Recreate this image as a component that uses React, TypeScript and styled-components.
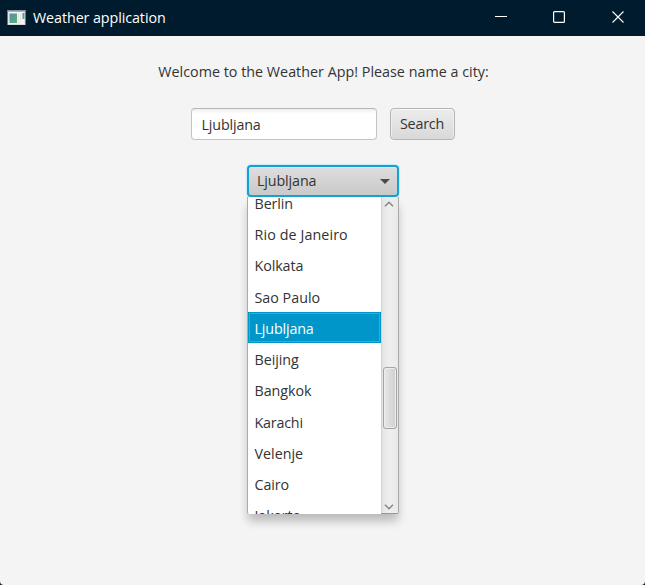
import React from "react";
import styled, { createGlobalStyle } from "styled-components";

const GlobalStyle = createGlobalStyle`
  * { box-sizing: border-box; }
  body { margin: 0; background: #001b2e; }
`;

const Window = styled.div`
  width: 645px;
  height: 585px;
  overflow: hidden;
  display: flex;
  flex-direction: column;
  background: #f4f4f4;
  border-radius: 0 0 4px 4px;
  color: #333;
  font: 14.3px/20px "Open Sans", "Noto Sans", sans-serif;
`;

const TitleBar = styled.header`
  height: 36px;
  flex: none;
  display: flex;
  align-items: center;
  background: #001b2e;
  color: #fff;
  padding-left: 7px;
`;

const Title = styled.span`
  margin-left: 7px;
  flex: 1;
`;

const WindowButton = styled.button`
  width: 58px;
  height: 36px;
  flex: none;
  padding: 0 0 2px;
  border: 0;
  background: none;
  display: grid;
  place-items: center;

  &:last-child {
    width: 60px;
    margin-right: -3px;
  }
`;

const Text = styled.span<{ $spacing?: number }>`
  display: inline-block;
  white-space: nowrap;
  letter-spacing: ${(p) => p.$spacing ?? 0}px;
`;

const Content = styled.main`
  display: flex;
  flex-direction: column;
  align-items: center;
  padding-top: 26px;
`;

const Welcome = styled.div`
  height: 20px;
  padding-left: 2px;
  white-space: nowrap;
`;

const SearchRow = styled.div`
  display: flex;
  gap: 13px;
  margin-top: 26px;
  height: 32px;
`;

const Field = styled.div`
  width: 186px;
  display: flex;
  align-items: center;
  padding: 2px 0 0 10px;
  border: 1px solid #c4c4c4;
  border-top-color: #b4b4b4;
  border-radius: 4px;
  background: linear-gradient(#efefef, #fff 5px);
`;

const SearchButton = styled.button`
  width: 65px;
  padding: 0;
  border: 1px solid #b5b5b5;
  border-radius: 4px;
  background: linear-gradient(#ececec, #d9d9d9);
  box-shadow: inset 0 1px #f8f8f8, inset 1px 0 #eee, inset -1px 0 #eee;
  color: #333;
  font: inherit;
`;

const Combo = styled.div`
  width: 152px;
  margin: 25px 0 0 1px;
`;

const ComboButton = styled.div`
  height: 32px;
  display: flex;
  align-items: center;
  justify-content: space-between;
  padding: 0 7px 0 8px;
  border: 2px solid #14a2d4;
  border-radius: 4px;
  background: linear-gradient(#dedede, #c9c9c9);
  box-shadow: 0 0 1px 1px #c9eaf5, inset 0 1px #e4e8ea;
`;

const Popup = styled.div`
  width: 152px;
  height: 317px;
  display: flex;
  border: 1px solid #aaa;
  border-top: 0;
  border-bottom: 0;
  border-radius: 0 0 2px 2px;
  background: #fff;
  box-shadow: 0 8px 10px -1px rgba(0, 0, 0, 0.24);
`;

const List = styled.ul`
  flex: 1;
  height: 317px;
  overflow: hidden;
  list-style: none;
  margin: 0;
  padding: 0;
`;

const Item = styled.li<{ $selected?: boolean }>`
  height: 31.25px;
  padding: 6.8px 0 0 6.5px;
  color: ${(p) => (p.$selected ? "#fff" : "#333")};
  background: ${(p) => (p.$selected ? "#0096c9" : "transparent")};
  box-shadow: ${(p) =>
    p.$selected ? "inset 0 0 0 1px #0096c9, inset 0 0 0 2px #33abd4" : "none"};
  &:first-child { margin-top: -10px; }
`;

const ScrollBar = styled.div`
  width: 17px;
  height: 317px;
  display: flex;
  flex-direction: column;
  align-items: center;
  border-bottom: 1px solid #999;
  box-shadow: inset 1px 0 #d2d2d2;
  background: linear-gradient(90deg, #e2e2e2, #efefef 50%, #e9e9e9);
`;

const ScrollArrow = styled.svg`
  width: 10px;
  height: 6px;
  margin: 4px 1px 3px 0;
  fill: none;
  stroke: #858585;
  stroke-width: 1.5;
`;

const Track = styled.div`
  flex: 1;
  padding: 157px 0 0 1px;
`;

const Thumb = styled.div`
  width: 14px;
  height: 62px;
  border: 1px solid #a3a3a3;
  border-radius: 3px;
  background: linear-gradient(90deg, #e8e8e8, #cfcfcf);
  box-shadow: inset 0 0 0 1px #ededed;
`;

const cities: [string, number][] = [
  ["Berlin", -0.1],
  ["Rio de Janeiro", 0.1],
  ["Kolkata", -0.1],
  ["Sao Paulo", 0],
  ["Ljubljana", -0.15],
  ["Beijing", -0.05],
  ["Bangkok", -0.05],
  ["Karachi", -0.2],
  ["Velenje", 0],
  ["Cairo", -0.1],
  ["Jakarta", 0],
];

function AppIcon() {
  return (
    <svg width="19" height="16" viewBox="0 0 19 16">
      <defs>
        <linearGradient id="pane" x1="0" y1="0" x2="1" y2="1">
          <stop offset="0" stopColor="#568bb0" />
          <stop offset="1" stopColor="#58b56b" />
        </linearGradient>
      </defs>
      <rect x=".5" y="0" width="18" height="15" fill="#d5d7da" />
      <rect x=".5" y="0" width="18" height="1.5" fill="#84909d" />
      <rect x="1.5" y="2" width="16" height="12" fill="#f3f3f3" />
      <rect x="2.5" y="3.5" width="7.5" height="9.5" fill="url(#pane)" />
      <path d="M13.5 4v9M11.5 4v9" stroke="#e4e4e4" />
      <rect x="15.5" y="3" width="2" height="6" fill="url(#pane)" />
    </svg>
  );
}

export default function App() {
  return (
    <>
      <GlobalStyle />
      <Window>
        <TitleBar>
          <AppIcon />
          <Title><Text $spacing={-0.08}>Weather application</Text></Title>
          <WindowButton aria-label="Minimize">
            <svg width="12" height="12"><path d="M0 5.5h12" stroke="#fff" /></svg>
          </WindowButton>
          <WindowButton aria-label="Maximize">
            <svg width="12" height="12">
              <rect x=".6" y=".6" width="10.8" height="10.8" rx="1" fill="none" stroke="#fff" strokeWidth="1.2" />
            </svg>
          </WindowButton>
          <WindowButton aria-label="Close">
            <svg width="12" height="12"><path d="M.5.5l11 11M11.5.5l-11 11" stroke="#fff" strokeWidth="1.1" /></svg>
          </WindowButton>
        </TitleBar>
        <Content>
          <Welcome><Text $spacing={0.02}>Welcome to the Weather App! Please name a city:</Text></Welcome>
          <SearchRow>
            <Field><Text $spacing={-0.15}>Ljubljana</Text></Field>
            <SearchButton><Text $spacing={-0.2}>Search</Text></SearchButton>
          </SearchRow>
          <Combo>
            <ComboButton>
              <Text $spacing={-0.12}>Ljubljana</Text>
              <svg width="10" height="5"><path d="M0 0h10L5 5z" fill="#4a4a4a" /></svg>
            </ComboButton>
            <Popup>
              <List>
                {cities.map(([name, spacing]) => (
                  <Item key={name} $selected={name === "Ljubljana"}>
                    <Text $spacing={spacing}>{name}</Text>
                  </Item>
                ))}
              </List>
              <ScrollBar>
                <ScrollArrow viewBox="0 0 10 6"><path d="M1 5.2l4-4 4 4" /></ScrollArrow>
                <Track><Thumb /></Track>
                <ScrollArrow viewBox="0 0 10 6"><path d="M1 .8l4 4 4-4" /></ScrollArrow>
              </ScrollBar>
            </Popup>
          </Combo>
        </Content>
      </Window>
    </>
  );
}
